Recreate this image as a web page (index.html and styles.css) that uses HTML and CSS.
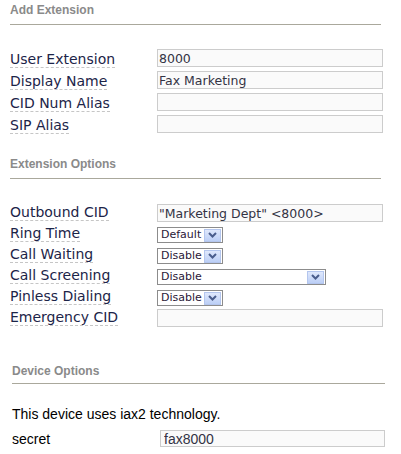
FILE: index.html
```html
<!DOCTYPE html>
<html>
<head>
<meta charset="utf-8">
<link rel="stylesheet" href="styles.css">
</head>
<body>
<div class="page">
  <section class="sec">
    <h2 class="sec-title">Add Extension</h2>
    <div class="rows">
      <div class="row"><span class="lbl"><span class="u">User Extension</span></span><input class="inp" type="text" value="8000"></div>
      <div class="row"><span class="lbl"><span class="u">Display Name</span></span><input class="inp" type="text" value="Fax Marketing"></div>
      <div class="row"><span class="lbl"><span class="u">CID Num Alias</span></span><input class="inp" type="text" value=""></div>
      <div class="row"><span class="lbl"><span class="u">SIP Alias</span></span><input class="inp" type="text" value=""></div>
    </div>
  </section>

  <section class="sec sec-2">
    <h2 class="sec-title">Extension Options</h2>
    <div class="rows rows-2">
      <div class="row"><span class="lbl"><span class="u">Outbound CID</span></span><input class="inp" type="text" value="&quot;Marketing Dept&quot; &lt;8000&gt;"></div>
      <div class="row row-sel"><span class="lbl"><span class="u">Ring Time</span></span>
        <div class="sel"><span class="sel-text">Default</span><span class="sel-btn"><svg width="9" height="6" viewBox="0 0 9 6"><path d="M1 1 L4.5 4.5 L8 1" fill="none" stroke="#4a5d8c" stroke-width="2"/></svg></span></div>
      </div>
      <div class="row row-sel"><span class="lbl"><span class="u">Call Waiting</span></span>
        <div class="sel"><span class="sel-text">Disable</span><span class="sel-btn"><svg width="9" height="6" viewBox="0 0 9 6"><path d="M1 1 L4.5 4.5 L8 1" fill="none" stroke="#4a5d8c" stroke-width="2"/></svg></span></div>
      </div>
      <div class="row row-sel"><span class="lbl"><span class="u">Call Screening</span></span>
        <div class="sel sel-wide"><span class="sel-text">Disable</span><span class="sel-btn"><svg width="9" height="6" viewBox="0 0 9 6"><path d="M1 1 L4.5 4.5 L8 1" fill="none" stroke="#4a5d8c" stroke-width="2"/></svg></span></div>
      </div>
      <div class="row row-sel"><span class="lbl"><span class="u">Pinless Dialing</span></span>
        <div class="sel"><span class="sel-text">Disable</span><span class="sel-btn"><svg width="9" height="6" viewBox="0 0 9 6"><path d="M1 1 L4.5 4.5 L8 1" fill="none" stroke="#4a5d8c" stroke-width="2"/></svg></span></div>
      </div>
      <div class="row"><span class="lbl"><span class="u">Emergency CID</span></span><input class="inp" type="text" value=""></div>
    </div>
  </section>

  <section class="sec sec-3">
    <h2 class="sec-title title-3">Device Options</h2>
    <p class="note">This device uses iax2 technology.</p>
    <div class="row row-3"><span class="lbl-3">secret</span><input class="inp inp-3" type="text" value="fax8000"></div>
  </section>
</div>
</body>
</html>
```

FILE: styles.css
```css
html, body {
  margin: 0;
  padding: 0;
  background: #ffffff;
}

.page {
  width: 401px;
}

.sec-title {
  margin: 0 0 0 10px;
  width: 371px;
  padding: 3px 0 7px 0;
  font-family: "Liberation Sans", Arial, sans-serif;
  font-weight: bold;
  font-size: 12px;
  line-height: 14px;
  color: #8a8a8a;
  border-bottom: 1px solid #aaa89c;
}

.sec-2 {
  margin-top: 18px;
}

.rows {
  margin-top: 23px;
  padding-left: 10px;
}

.rows-2 {
  margin-top: 23px;
}

.row {
  display: flex;
  align-items: flex-start;
  height: 22px;
}

.rows-2 .row {
  height: 21px;
}

.lbl {
  width: 147px;
  flex: none;
  font-family: "DejaVu Sans", Verdana, sans-serif;
  font-size: 14px;
  line-height: 22px;
  color: #1c2448;
}

.rows-2 .lbl {
  line-height: 21px;
}

.u {
  border-bottom: 1px dashed #c6c6c6;
}

.inp {
  box-sizing: border-box;
  width: 226px;
  height: 18px;
  margin: 1px 0 0 0;
  padding: 0 0 0 1px;
  border: 1px solid #cccccc;
  background: #fafafa;
  font-family: "DejaVu Sans", Verdana, sans-serif;
  font-size: 12.5px;
  color: #333344;
  outline: none;
}

.rows-2 .inp {
  margin-top: 2px;
}

.sel {
  box-sizing: border-box;
  width: 66px;
  height: 16px;
  margin-top: 4px;
  border: 1px solid #8c8c8c;
  background: #ffffff;
  display: flex;
  align-items: center;
  justify-content: space-between;
  padding: 0 1px 0 3px;
}

.sel-wide {
  width: 169px;
}

.sel-text {
  font-family: "DejaVu Sans", Verdana, sans-serif;
  font-size: 11px;
  line-height: 14px;
  color: #2a1838;
}

.sel-btn {
  box-sizing: border-box;
  width: 17px;
  height: 13px;
  border: 1px solid #b4c6ee;
  background: linear-gradient(#dfe8fc, #bccff6);
  display: flex;
  align-items: center;
  justify-content: center;
}

.sel-btn svg {
  display: block;
}

.sec-3 {
  margin-top: 33px;
}

.title-3 {
  margin-left: 12px;
  width: 373px;
  padding-bottom: 5px;
}

.note {
  margin: 21px 0 0 12px;
  font-family: "Liberation Sans", Arial, sans-serif;
  font-size: 14px;
  line-height: 18px;
  color: #000000;
}

.row-3 {
  padding-left: 12px;
  margin-top: 6px;
}

.lbl-3 {
  width: 148px;
  flex: none;
  font-family: "Liberation Sans", Arial, sans-serif;
  font-size: 14px;
  line-height: 20px;
  color: #000000;
}

.inp-3 {
  width: 225px;
  height: 17px;
  font-family: "Liberation Sans", Arial, sans-serif;
  font-size: 14px;
  padding-left: 3px;
}
```
